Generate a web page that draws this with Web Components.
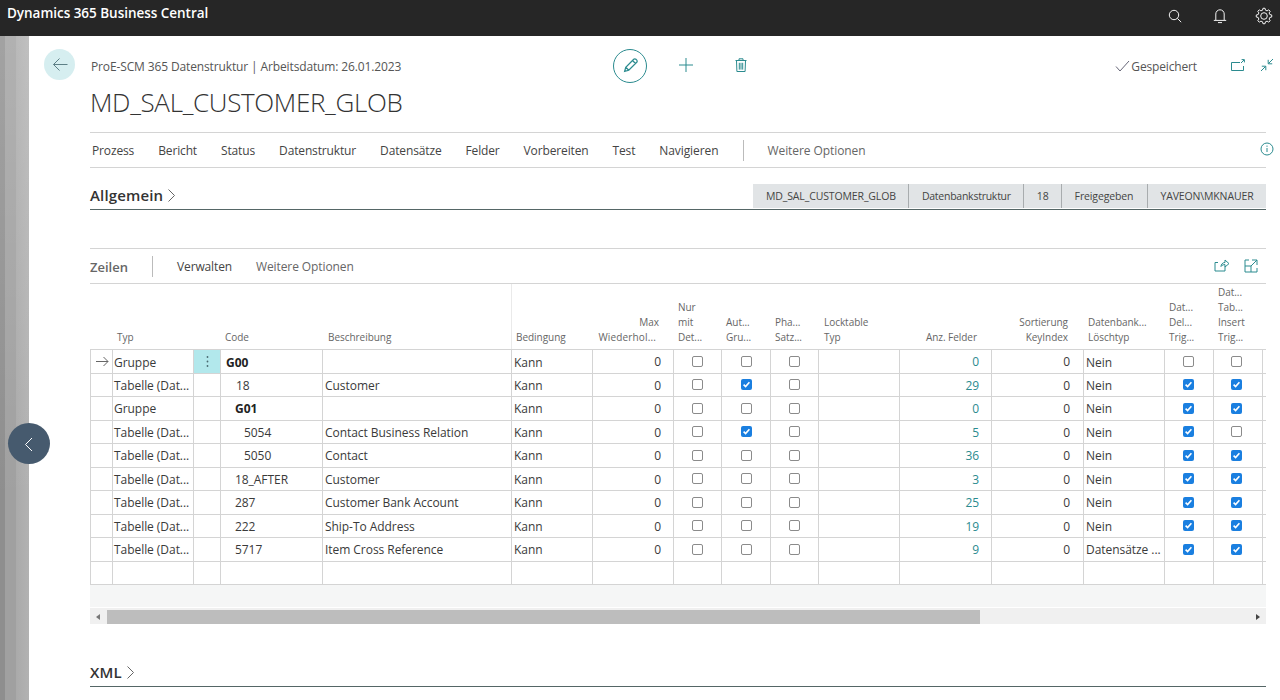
<!DOCTYPE html>
<html lang="de"><head><meta charset="utf-8"><title>MD_SAL_CUSTOMER_GLOB</title>
<style>
html,body{margin:0;padding:0;height:700px;overflow:hidden;background:#fff;font-family:"Open Sans","Noto Sans",sans-serif;color:#333}
</style></head><body>
<bc-shell>
  <bc-appbar slot="bar">Dynamics 365 Business Central</bc-appbar>
  <bc-header>
    <span slot="sub">ProE-SCM 365 Datenstruktur | Arbeitsdatum: 26.01.2023</span>
    <span slot="title">MD_SAL_CUSTOMER_GLOB</span>
  </bc-header>
  <bc-actions></bc-actions>
  <bc-fasttab label="Allgemein" tags="MD_SAL_CUSTOMER_GLOB|Datenbankstruktur|18|Freigegeben|YAVEON\MKNAUER"></bc-fasttab>
  <bc-lines></bc-lines>
  <bc-fasttab class="xml" label="XML"></bc-fasttab>
</bc-shell>
<script>
const T='#2b8b8f';
const ic=(d,w,h,vb,extra='')=>`<svg width="${w}" height="${h}" viewBox="${vb}" fill="none" stroke="currentColor" stroke-width="1" ${extra}>${d}</svg>`;
function gear(cx,cy,R,r,n){let p=[];for(let i=0;i<n;i++){const a=i*2*Math.PI/n,s=Math.PI/n;
  [[r,a-s*.62],[R,a-s*.34],[R,a+s*.34],[r,a+s*.62]].forEach(([q,t])=>p.push((cx+q*Math.sin(t)).toFixed(2)+' '+(cy-q*Math.cos(t)).toFixed(2)));}
  return 'M'+p.join('L')+'Z';}
function def(name,html,init){
  customElements.define(name,class extends HTMLElement{
    constructor(){super();this.attachShadow({mode:'open'});
      const t=document.createElement('template');t.innerHTML=typeof html==='function'?html(this):html;
      this.shadowRoot.appendChild(t.content.cloneNode(true));}
    connectedCallback(){ if(init&&!this._i){this._i=1;init(this);} }
  });
}
def('bc-shell',`<style>
:host{display:block;height:700px;position:relative;overflow:hidden}
.body{display:flex;height:664px}
.strip{flex:0 0 29px;background:linear-gradient(180deg,rgba(255,255,255,.18),rgba(255,255,255,0) 70%),linear-gradient(90deg,#8e8e8e 0,#8e8e8e 5px,#a0a0a0 5px,#a0a0a0 16px,#aaa 16px,#b2b2b2 29px)}
.main{flex:1;min-width:0;padding:0 14px 0 15px}
.nav{position:absolute;left:8px;top:423px;width:42px;height:41px;border-radius:50%;background:#465a6e;color:#fff;display:flex;align-items:center;justify-content:center}
</style><slot name="bar"></slot><div class="body"><div class="strip"></div><div class="main"><slot></slot></div></div>
<div class="nav">${ic('<path d="M15 6 8.5 12.5 15 19"/>',24,24,'0 0 24 24','stroke-width="1.4"')}</div>`);

def('bc-appbar',`<style>
:host{display:flex;align-items:flex-start;height:36px;background:#262626;color:#fff;font:600 13.5px/1 "Open Sans",sans-serif;letter-spacing:-.03px}
.t{padding:7px 0 0 7px;flex:1}
.i{display:flex;color:#f2f2f2;padding-top:7px}
svg{display:block}
.a{width:18px;height:18px}
</style><div class="t"><slot></slot></div><div class="i">
<span class="a" style="margin-right:27px">${ic('<circle cx="8" cy="8" r="4.7"/><path d="m11.4 11.4 3.8 3.8"/>',18,18,'0 0 18 18')}</span>
<span class="a" style="margin-right:26px">${ic('<path d="M4.800 13.200V7a4.200 4.200 0 0 1 8.400 0v6.200M2.800 13.400h12.400M7 15.600h4"/>',18,18,'0 0 18 18','stroke-width="1.5"')}</span>
<span class="a" style="margin-right:7px">${ic(`<path d="${gear(9,9,7.8,6,8)}"/><circle cx="9" cy="9" r="3.300"/>`,18,18,'0 0 18 18','stroke-width="1.1"')}</span>
</div>`);

def('bc-header',`<style>
:host{display:block;height:96px;position:relative}
.r{display:flex;padding-top:13px;color:${T}}
.b{flex:0 0 31px;height:31px;border-radius:50%;background:#d6eef0;display:flex;align-items:center;justify-content:center;color:#5d7f86}
.s{flex:0 0 522px;margin-left:16px;font-size:12px;color:#555;line-height:36px;height:34px;letter-spacing:-.13px;white-space:nowrap}
.e{flex:0 0 34px;height:34px;box-sizing:border-box;border:1px solid ${T};border-radius:50%;display:flex;align-items:center;justify-content:center}
.p{margin-left:30px;width:18px;height:32px;display:flex;align-items:center}
.d{margin-left:38px;width:18px;height:32px;display:flex;align-items:center}
.sp{flex:1}
.g{display:flex;align-items:center;height:34px;font-size:12px;color:#555;letter-spacing:-.15px;gap:1px;margin-right:33px}
.g svg{color:#667}
.o{width:16px;height:32px;display:flex;align-items:center;margin-right:13px}
.c{width:16px;height:32px;display:flex;align-items:center;margin-right:-9px}
h1{margin:0 0 0 46px;font:300 26px/34px "Open Sans",sans-serif;color:#333;letter-spacing:-.33px;padding-top:2px}
</style>
<div class="r"><div class="b">${ic('<path d="M16.500 8.500H2.500M8.500 2.500l-6 6 6 6"/>',18,17,'0 0 18 17')}</div>
<div class="s"><slot name="sub"></slot></div>
<div class="e">${ic('<path d="M3.700 12.300 4.600 9 11 2.600a1.200 1.200 0 0 1 1.700 0l.7.7a1.200 1.200 0 0 1 0 1.700L7 11.400l-3.300.9ZM4.600 9 7 11.400M10 3.600 12.400 6"/>',20,20,'0 0 16 16','stroke-width=".9"')}</div>
<div class="p">${ic('<path d="M9 2v14M2 9h14"/>',18,18,'0 0 18 18')}</div>
<div class="d">${ic('<path d="M2.500 3.500h11M6 3.200V1.800h4v1.400M3.500 3.500l.4 11h8.200l.4-11M6.300 5.800v6.800M8 5.800v6.800M9.700 5.800v6.800"/>',16,16,'0 0 16 16')}</div>
<div class="sp"></div>
<div class="g">${ic('<path d="m1 7.500 4 4.500 9-10"/>',15,14,'0 0 15 14')}<span>Gespeichert</span></div>
<div class="o">${ic('<path d="M13.500 8v4.500h-12v-8h8.500M11 5l3-3M11.600 1.600h2.800v2.800"/>',16,15,'0 0 16 15')}</div>
<div class="c">${ic('<path d="M9.500 6.500 14 2M9.200 2.800v4h4M6.500 9.500 2 14M6.800 13.200v-4h-4"/>',16,16,'0 0 16 16')}</div>
</div><h1><slot name="title"></slot></h1>`);

def('bc-actions',`<style>
:host{display:flex;margin-left:46px;height:34px;border-top:1px solid #d4d4d4;border-bottom:1px solid #d4d4d4;align-items:center;font-size:12px;color:#444;letter-spacing:-.14px;position:relative;padding-left:2px}
span{margin-right:24px;white-space:nowrap}
i{width:1px;height:21px;background:#bbb;margin:0 24px 0 0}
.m{color:#666;letter-spacing:-.08px}
.sp{flex:1}
svg{color:${T};display:block;margin:-2px -8px 0 0}
</style>
<span>Prozess</span><span>Bericht</span><span>Status</span><span>Datenstruktur</span><span>Datensätze</span><span>Felder</span><span>Vorbereiten</span><span>Test</span><span style="letter-spacing:-.08px">Navigieren</span><i></i><span class="m">Weitere Optionen</span><div class="sp"></div>
${ic('<circle cx="7" cy="7" r="6"/><path d="M7 6v4M7 3.600v1.200"/>',14,14,'0 0 14 14')}`);

def('bc-fasttab',h=>{
  const tags=(h.getAttribute('tags')||'');
  return `<style>
:host{display:flex;margin-left:46px;height:42px;border-bottom:1px solid #566;align-items:flex-end;position:relative;box-sizing:border-box}
:host(.xml){margin-top:25px;height:38px}
.l{font:600 15px/26px "Open Sans",sans-serif;color:#333;display:flex;align-items:center;gap:4px;height:26px;letter-spacing:.15px;margin-bottom:1px}
.sp{flex:1}
.t{display:flex;background:#e1e4e6;height:24px;font-size:10.5px;line-height:24px;color:#444;letter-spacing:-.13px;margin-bottom:1px}
.t span{padding:0 12.5px;border-left:1px solid #a8acae;white-space:nowrap}
.t span:first-child{border-left:0}
.t span:nth-child(2){letter-spacing:-.25px}
.t span:nth-child(4){padding-right:13.5px}
svg{color:#666;display:block}
</style><div class="l">${h.getAttribute('label')}${ic('<path d="m1.500 1.500 6 6-6 6"/>',9,15,'0 0 9 15')}</div><div class="sp"></div>${tags?`<div class="t">${tags.split('|').map(s=>`<span>${s}</span>`).join('')}</div>`:''}`;
});

const COLS='22px 81px 27px 102px 189px 81px 81px 48px 49px 48px 81px 92px 92px 81px 49px 49px 4px';
def('bc-check',h=>{
  const on=h.hasAttribute('on');
  return `<style>:host{display:flex;align-items:center;justify-content:center;height:100%}
b{display:block;box-sizing:border-box;width:11px;height:11px;border-radius:2px;${on?'background:#1a7fe0':'border:1px solid #8b8b8b;background:#fff'}}
svg{display:block}</style><b>${on?`<svg width="11" height="11" viewBox="0 0 11 11" fill="none" stroke="#fff" stroke-width="1.6"><path d="m2.600 5.600 2 2 3.800-4.400"/></svg>`:''}</b>`;
});
def('bc-lines',()=>{
  const hd=[['',''],['Typ','l5'],['',''],['Code','l5'],['Beschreibung','l6'],['Bedingung','l4 f'],['Max<br><span style="margin-right:3px;letter-spacing:.15px">Wiederhol...</span>','r14'],['Nur<br>mit<br>Det...','l5'],['Aut...<br>Gru...','l5'],['Pha...<br>Satz...','l5'],['Locktable<br>Typ','l6'],['Anz. Felder','r14'],['Sortierung<br>KeyIndex','r15'],['Datenbank...<br>Löschtyp','l5'],['Dat...<br>Del...<br>Trig...','l5'],['Dat...<br>Tab...<br>Insert<br>Trig...','l5'],['','']];
  const rows=[
   ['Gruppe','G00',0,1,'',0,0,0,0,'0',0,0,'Nein'],
   ['Tabelle (Dat...','18',10,0,'Customer',0,1,0,0,'29',1,1,'Nein'],
   ['Gruppe','G01',9,1,'',0,0,0,0,'0',1,1,'Nein'],
   ['Tabelle (Dat...','5054',18,0,'Contact Business Relation',0,1,0,0,'5',1,0,'Nein'],
   ['Tabelle (Dat...','5050',18,0,'Contact',0,0,0,0,'36',1,1,'Nein'],
   ['Tabelle (Dat...','18_AFTER',9,0,'Customer',0,0,0,0,'3',1,1,'Nein'],
   ['Tabelle (Dat...','287',9,0,'Customer Bank Account',0,0,0,0,'25',1,1,'Nein'],
   ['Tabelle (Dat...','222',9,0,'Ship-To Address',0,0,0,0,'19',1,1,'Nein'],
   ['Tabelle (Dat...','5717',9,0,'Item Cross Reference',0,0,0,0,'9',1,1,'Datensätze ...']];
  const ck=(v,pr=0)=>`<div class="c" style="padding-right:${pr}px"><bc-check ${v?'on':''}></bc-check></div>`;
  const rowHtml=(r,i)=>`<div class="row ${i===0?'first':''}">
    <div class="c ar">${i===0?ic('<path d="M1 5.500h12M8.500 1l4.500 4.500L8.500 10"/>',14,11,'0 0 14 11'):''}</div>
    <div class="c t" style="padding-left:1px">${r[0]}</div>
    <div class="c ${i===0?'dots':''}">${i===0?'<svg width="3" height="13" viewBox="0 0 3 13" fill="#4a6a70"><circle cx="1.500" cy="2" r=".9"/><circle cx="1.500" cy="6.500" r=".9"/><circle cx="1.500" cy="11" r=".9"/></svg>':''}</div>
    <div class="c t ${r[3]?'bd':''}" style="padding-left:${5+r[2]}px">${r[1]}</div>
    <div class="c t">${r[4]}</div>
    <div class="c t">Kann</div>
    <div class="c t n" style="padding-right:12px">0</div>
    ${ck(r[5])}${ck(r[6])}${ck(r[7])}
    <div class="c"></div>
    <div class="c t n lk" style="padding-right:12px">${r[9]}</div>
    <div class="c t n" style="padding-right:13px">0</div>
    <div class="c t">${r[12]}</div>
    ${ck(r[10],2)}${ck(r[11],3)}
    <div class="c"></div></div>`;
  const empty=`<div class="row">${Array(17).fill('<div class="c"></div>').join('')}</div>`;
  return `<style>
:host{display:block;margin-left:46px;margin-top:38px;border-top:1px solid #d4d4d4;font-size:12px;color:#3a3a3a}
.tb{height:34px;border-bottom:1px solid #d4d4d4;display:flex;align-items:center;letter-spacing:-.13px;color:#444}
.z{font:600 13px/1 "Open Sans",sans-serif;color:#666;width:62px;padding-top:3px;letter-spacing:0}
.tb i{width:1px;height:21px;background:#bbb;margin-right:24px}
.tb span{margin-right:24px}
.tb .m{color:#666;letter-spacing:-.1px}
.sp{flex:1}
.tb svg{color:${T};display:block}
.hd{display:grid;grid-template-columns:${COLS};height:65px;border-bottom:1px solid #d4d4d4;font-size:10px;line-height:15px;color:#666;letter-spacing:-.04px}
.h{display:flex;align-items:flex-end;padding-bottom:4px;white-space:nowrap;box-sizing:border-box}
.h.f{border-left:1px solid #eaeaea}
.row{display:grid;grid-template-columns:${COLS};height:23.5px;box-sizing:border-box;border-bottom:1px solid #d4d4d4}
.c{border-left:1px solid #d4d4d4;box-sizing:border-box;min-width:0;overflow:hidden;position:relative}
.t{line-height:23px;padding-left:2px;white-space:nowrap;letter-spacing:-.05px}
.first .t{line-height:25px}
.n{text-align:right;padding-left:0}
.first .n{line-height:23px}
.lk{color:${T}}
.bd{font-weight:700;color:#222}
.ar{display:flex;align-items:center;justify-content:center;color:#666}
.dots{background:#b2e8ec;display:flex;align-items:center;justify-content:center}
.band{height:22px;background:#f5f6f6;border-bottom:1px solid #fff}
.sb{height:16px;background:#f0f0f0;display:flex;align-items:flex-end;position:relative}
.th{position:absolute;left:17px;width:873px;top:2px;height:14px;background:#bdbdbd}
.a1,.a2{position:absolute;top:6px;width:0;height:0;border-top:3.5px solid transparent;border-bottom:3.5px solid transparent}
.a1{left:6px;border-right:4px solid #777}
.a2{right:6px;border-left:4px solid #444}
</style>
<div class="tb"><div class="z">Zeilen</div><i></i><span>Verwalten</span><span class="m">Weitere Optionen</span><div class="sp"></div>
<div style="margin-right:15px;height:14px">${ic('<path d="M11 7.500v4.500H1V3.500h3M7 7.500c0-2 1.500-4 4-4V1l4 3.600L11 8V5.600C9.500 5.600 8 6 7 7.500Z"/>',15,14,'0 0 15 14')}</div>
<div style="margin-right:8px;height:14px">${ic('<path d="M5 1H1v12h12V9M8 1h5v5M13 1 7 7M1 7h6v6"/>',14,14,'0 0 14 14')}</div></div>
<div class="hd">${hd.map(([t,c])=>{const m=c.match(/([lr])(\d+)/);const st=m?(m[1]==='l'?`padding-left:${m[2]}px`:`justify-content:flex-end;text-align:right;padding-right:${m[2]}px`):'';return `<div class="h ${/\bf\b/.test(c)?'f':''}" style="${st}"><div>${t}</div></div>`}).join('')}</div>
${rows.map(rowHtml).join('')}${empty}
<div class="band"></div>
<div class="sb"><div class="a1"></div><div class="th"></div><div class="a2"></div></div>`;
});
</script>
</body></html>
